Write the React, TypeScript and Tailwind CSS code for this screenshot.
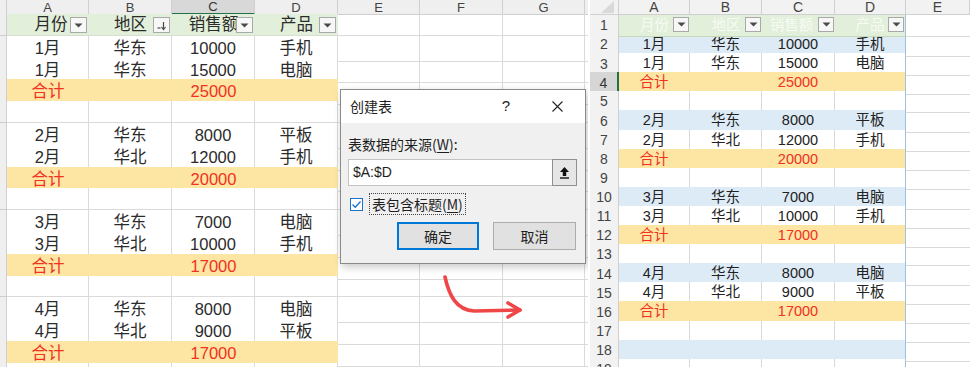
import React from "react";

type Kind = "head" | "data" | "sum" | "blank" | "blue" | "blueblank";
type Row = { kind: Kind; cells: string[] };

const LGRID = "grid grid-cols-[7px_82px_83px_83px_83px_82px_83px_82px_3px]";
const RGRID = "grid grid-cols-[29px_71px_72px_73px_71px_1fr]";

const HEAD = ["月份", "地区", "销售额", "产品"];

const leftRows: Row[] = [
  { kind: "head", cells: HEAD },
  { kind: "data", cells: ["1月", "华东", "10000", "手机"] },
  { kind: "data", cells: ["1月", "华东", "15000", "电脑"] },
  { kind: "sum", cells: ["合计", "", "25000", ""] },
  { kind: "blank", cells: ["", "", "", ""] },
  { kind: "data", cells: ["2月", "华东", "8000", "平板"] },
  { kind: "data", cells: ["2月", "华北", "12000", "手机"] },
  { kind: "sum", cells: ["合计", "", "20000", ""] },
  { kind: "blank", cells: ["", "", "", ""] },
  { kind: "data", cells: ["3月", "华东", "7000", "电脑"] },
  { kind: "data", cells: ["3月", "华北", "10000", "手机"] },
  { kind: "sum", cells: ["合计", "", "17000", ""] },
  { kind: "blank", cells: ["", "", "", ""] },
  { kind: "data", cells: ["4月", "华东", "8000", "电脑"] },
  { kind: "data", cells: ["4月", "华北", "9000", "平板"] },
  { kind: "sum", cells: ["合计", "", "17000", ""] },
  { kind: "blank", cells: ["", "", "", ""] },
];

const rightRows: Row[] = [
  { kind: "head", cells: HEAD },
  { kind: "blue", cells: ["1月", "华东", "10000", "手机"] },
  { kind: "data", cells: ["1月", "华东", "15000", "电脑"] },
  { kind: "sum", cells: ["合计", "", "25000", ""] },
  { kind: "blank", cells: ["", "", "", ""] },
  { kind: "blue", cells: ["2月", "华东", "8000", "平板"] },
  { kind: "data", cells: ["2月", "华北", "12000", "手机"] },
  { kind: "sum", cells: ["合计", "", "20000", ""] },
  { kind: "blank", cells: ["", "", "", ""] },
  { kind: "blue", cells: ["3月", "华东", "7000", "电脑"] },
  { kind: "data", cells: ["3月", "华北", "10000", "手机"] },
  { kind: "sum", cells: ["合计", "", "17000", ""] },
  { kind: "blank", cells: ["", "", "", ""] },
  { kind: "blue", cells: ["4月", "华东", "8000", "电脑"] },
  { kind: "data", cells: ["4月", "华北", "9000", "平板"] },
  { kind: "sum", cells: ["合计", "", "17000", ""] },
  { kind: "blank", cells: ["", "", "", ""] },
  { kind: "blueblank", cells: ["", "", "", ""] },
  { kind: "blank", cells: ["", "", "", ""] },
];

function Tri() {
  return (
    <svg width="9" height="5" viewBox="0 0 9 5">
      <path d="M0.5 0.5 H8.5 L4.5 4.5 Z" fill="#4a4a4a" />
    </svg>
  );
}

function SortIcon() {
  return (
    <svg width="11" height="11" viewBox="0 0 11 11">
      <path d="M1.5 8 H4.5" stroke="#4a4a4a" strokeWidth="1.2" />
      <path d="M7.5 2 V9" stroke="#4a4a4a" strokeWidth="1.2" />
      <path d="M5.5 7 L7.5 9.5 L9.5 7" stroke="#4a4a4a" strokeWidth="1.2" fill="none" />
    </svg>
  );
}

function LeftPanel() {
  const letters = ["A", "B", "C", "D", "E", "F", "G"];
  return (
    <div className="relative w-[588px] h-[367px] shrink-0 overflow-hidden">
      <div className={LGRID + " h-[14px]"}>
        <div className="bg-[#efefef] border-r border-b border-[#cfcfcf]" />
        {letters.map((l) => (
          <div
            key={l}
            className={
              l === "C"
                ? "bg-[#d8d8d8] border-r border-[#cfcfcf] border-b-2 border-b-[#217346] flex items-center justify-center text-[13px] leading-none text-[#333]"
                : "bg-[#efefef] border-r border-b border-[#cfcfcf] flex items-center justify-center text-[13px] leading-none text-[#444]"
            }
          >
            {l}
          </div>
        ))}
        <div className="bg-[#efefef] border-b border-[#cfcfcf]" />
      </div>
      {leftRows.map((r, ri) => (
        <div key={ri} className={LGRID + " h-[21.8px]"}>
          <div className="bg-[#efefef] border-r border-b border-[#cfcfcf]" />
          {r.cells.map((c, ci) => {
            if (r.kind === "head") {
              return (
                <div
                  key={ci}
                  className="relative bg-[#e2efda] border-b border-[#d6dfd0] flex items-center justify-center text-[16.5px] text-[#2b2b2b] overflow-hidden"
                >
                  <span className={ci === 0 ? "pl-[6px]" : ""}>{c}</span>
                  <span className="absolute right-[2px] top-[3px] w-[17px] h-[16px] border border-[#a9a9a9] bg-[#f7f7f7] flex items-center justify-center">
                    {ci === 1 ? <SortIcon /> : <Tri />}
                  </span>
                </div>
              );
            }
            if (r.kind === "sum") {
              return (
                <div
                  key={ci}
                  className="bg-[#fde5a3] border-b border-[#f4dc9c] flex items-center justify-center text-[16.5px] text-[#f0321e]"
                >
                  {c}
                </div>
              );
            }
            return (
              <div
                key={ci}
                className="bg-white border-r border-b border-[#dadada] flex items-center justify-center text-[16.5px] text-[#2b2b2b]"
              >
                {c}
              </div>
            );
          })}
          <div className="border-r border-b border-[#dadada]" />
          <div className="border-r border-b border-[#dadada]" />
          <div className="border-r border-b border-[#dadada]" />
          <div className="border-b border-[#dadada]" />
        </div>
      ))}

      {/* Dialog */}
      <div className="absolute left-[340px] top-[89px] w-[246px] h-[175px] border border-[#8a8a8a] bg-[#f0f0f0] shadow-[2px_3px_8px_rgba(0,0,0,0.22)] flex flex-col font-['Noto_Sans_CJK_SC','Liberation_Sans',sans-serif] text-[#1e1e1e]">
        <div className="h-[33px] bg-white flex items-center pl-[9px] text-[14px]">
          <span>创建表</span>
          <span className="ml-auto text-[15px] font-['Liberation_Sans',sans-serif]">?</span>
          <svg className="ml-[42px] mr-[22px]" width="11" height="11" viewBox="0 0 11 11">
            <path d="M0.5 0.5 L10.5 10.5 M10.5 0.5 L0.5 10.5" stroke="#222" strokeWidth="1.1" />
          </svg>
        </div>
        <div className="pl-[7px] pt-[11px] flex flex-col">
          <div className="text-[14px] leading-[20px] h-[20px]">
            表数据的来源(<span className="underline underline-offset-2">W</span>):
          </div>
          <div className="mt-[5px] flex h-[27px]">
            <div className="w-[204px] bg-white border border-[#c3c3c3] border-r-0 flex items-center pl-[4px] text-[14px] font-['Liberation_Sans',sans-serif]">
              $A:$D
            </div>
            <div className="w-[25px] bg-[#e6e6e6] border border-[#8f8f8f] flex items-center justify-center">
              <svg width="11" height="13" viewBox="0 0 11 13">
                <path d="M5.5 1 L10 6 H7.2 V10 H3.8 V6 H1 Z" fill="#111" />
                <path d="M1 12 H10" stroke="#111" strokeWidth="1.4" />
              </svg>
            </div>
          </div>
          <div className="mt-[7px] flex items-center h-[22px]">
            <div className="ml-[2px] w-[13px] h-[13px] border border-[#1874cd] bg-white flex items-center justify-center">
              <svg width="11" height="11" viewBox="0 0 11 11">
                <path d="M1.5 5.5 L4.3 8.3 L9.5 2.5" stroke="#1874cd" strokeWidth="1.3" fill="none" />
              </svg>
            </div>
            <div className="ml-[6px] h-[22px] border border-dotted border-[#444] px-[2px] flex items-center text-[14px]">
              表包含标题(<span className="underline underline-offset-2">M</span>)
            </div>
          </div>
          <div className="mt-[7px] flex h-[28px]">
            <div className="ml-[49px] w-[82px] h-[28px] border-2 border-[#0078d7] bg-[#e1e1e1] flex items-center justify-center text-[14px]">
              确定
            </div>
            <div className="ml-[14px] w-[83px] h-[28px] border border-[#adadad] bg-[#e1e1e1] flex items-center justify-center text-[14px]">
              取消
            </div>
          </div>
        </div>
      </div>

      {/* Arrow */}
      <svg className="absolute left-[438px] top-[270px]" width="90" height="55" viewBox="0 0 90 55">
        <path d="M7 7 C 11 25, 18 40, 36 41 L 82 40" stroke="#ef4747" strokeWidth="3.6" fill="none" strokeLinecap="round" />
        <path d="M70 33 L 82 40 L 70 47" stroke="#ef4747" strokeWidth="3.6" fill="none" strokeLinecap="round" strokeLinejoin="round" />
      </svg>
    </div>
  );
}

function RightPanel() {
  const letters = ["A", "B", "C", "D", "E"];
  return (
    <div className="w-[380px] h-[367px] shrink-0 overflow-hidden">
      <div className={RGRID + " h-[15px]"}>
        <div className="bg-[#f2f2f2] border-r border-b border-[#d0d0d0] flex items-end justify-end pr-[4px] pb-[1px]">
          <svg width="13" height="12" viewBox="0 0 13 12">
            <path d="M13 0 V12 H0 Z" fill="#d9d9d9" />
          </svg>
        </div>
        {letters.map((l) => (
          <div
            key={l}
            className="bg-[#f2f2f2] border-r border-b border-[#d0d0d0] flex items-center justify-center text-[14px] leading-none text-[#444]"
          >
            {l}
          </div>
        ))}
      </div>
      {rightRows.map((r, ri) => {
        const active = ri === 3;
        return (
          <div key={ri} className={RGRID + " h-[19.1px]"}>
            <div
              className={
                active
                  ? "bg-[#d6d6d6] border-r-2 border-r-[#217346] border-b border-[#d0d0d0] flex items-center justify-center text-[14px] text-[#333]"
                  : "bg-[#f2f2f2] border-r border-b border-[#d0d0d0] flex items-center justify-center text-[14px] text-[#444]"
              }
            >
              {ri + 1}
            </div>
            {r.cells.map((c, ci) => {
              const last = ci === 3;
              if (r.kind === "head") {
                return (
                  <div
                    key={ci}
                    className={
                      (last ? "border-r border-r-[#9fc0e0] " : "") +
                      "relative bg-[#e2efda] border-b border-[#c6d9b8] flex items-center justify-center text-[14.5px] text-[#f7fbf4] overflow-hidden"
                    }
                  >
                    <span className={ci === 2 ? "pr-[14px]" : ""}>{c}</span>
                    <span className="absolute right-[1px] top-[2px] w-[16px] h-[15px] border border-[#a9a9a9] bg-[#f7f7f7] flex items-center justify-center">
                      <Tri />
                    </span>
                  </div>
                );
              }
              let cls = "";
              if (r.kind === "sum") {
                cls = "bg-[#fde5a3] text-[#f0321e] border-r " + (last ? "border-r-[#9fc0e0]" : "border-r-[#fde5a3]");
              } else if (r.kind === "blue" || r.kind === "blueblank") {
                cls = "bg-[#ddebf7] text-[#222] border-r " + (last ? "border-r-[#9fc0e0]" : "border-r-[#ddebf7]");
              } else {
                cls = "bg-white text-[#222] border-r " + (last ? "border-r-[#9fc0e0]" : "border-r-[#d9d9d9]");
              }
              return (
                <div
                  key={ci}
                  className={cls + " border-b border-b-[#b9cbe0] flex items-center justify-center text-[14.5px]"}
                >
                  {c}
                </div>
              );
            })}
            <div className="border-b border-[#dadada]" />
          </div>
        );
      })}
    </div>
  );
}

export default function App() {
  return (
    <div className="w-[970px] h-[367px] overflow-hidden bg-white flex font-['Liberation_Sans','Noto_Sans_CJK_SC',sans-serif]">
      <LeftPanel />
      <div className="w-[2px] shrink-0" />
      <RightPanel />
    </div>
  );
}
